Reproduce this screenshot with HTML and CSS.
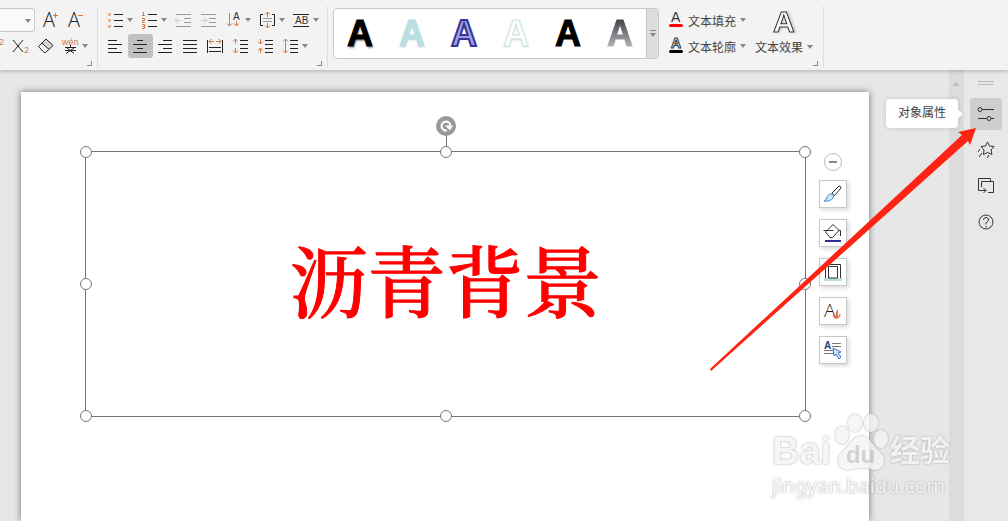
FILE: index.html
```html
<!DOCTYPE html>
<html lang="zh-CN">
<head>
  <meta charset="UTF-8">
  <meta name="viewport" content="width=device-width, initial-scale=1.0">
  <title>演示</title>
  <link rel="stylesheet" href="styles.css">
</head>
<body>
  <header class="ribbon">
    <div class="group group-font">
      <div class="row">
        <span class="combo"><select aria-label="字号"><option></option></select><i class="caret"></i></span>
        <button class="tool" aria-label="增大字号"><svg class="icon" viewBox="0 0 17 18"><text class="thin" x="0" y="16" font-size="20">A</text><path class="o" d="M10 4.500h5M12.500 2v5"/></svg></button>
        <button class="tool" aria-label="减小字号"><svg class="icon" viewBox="0 0 17 18"><text class="thin" x="0" y="16" font-size="20">A</text><path class="o" d="M10 4.500h5"/></svg></button>
      </div>
      <div class="row">
        <button class="tool" aria-label="上标"><svg class="icon" viewBox="0 0 17 18"><path class="k" d="M1 4l10 11M11 4L1 15"/><text class="ot" x="12" y="8" font-size="9">2</text></svg></button>
        <button class="tool" aria-label="下标"><svg class="icon" viewBox="0 0 17 18"><path class="k" d="M1 3l10 12M11 3L1 15"/><text class="ot" x="12" y="16" font-size="9">2</text></svg></button>
        <button class="tool" aria-label="清除格式"><svg class="icon" viewBox="0 0 17 18"><path d="M5 6l4-4 7 6-4 5z" fill="#d8d8d8"/><path class="k" d="M1.500 9.500L9 2l7 6.500-7.500 7H7zM5 6l7 6.500"/></svg></button>
        <button class="tool" aria-label="拼音指南"><svg class="icon" viewBox="0 0 17 18"><text class="ot" x="0" y="8" font-size="9">wén</text><path class="k" d="M3 10.500h11M8.500 8v2M5 11l7 5.500M12 11l-8 5.500M3 13.500h11"/></svg><i class="caret"></i></button>
      </div>
      <i class="launcher"></i>
    </div>

    <div class="group group-para">
      <div class="row">
        <button class="tool" aria-label="项目符号"><svg class="icon" viewBox="0 0 17 18"><path class="k" d="M7 3.500h9M7 9.500h9M7 15.500h9"/><g class="o"><circle cx="2.500" cy="3.500" r="1"/><circle cx="2.500" cy="9.500" r="1"/><circle cx="2.500" cy="15.500" r="1"/></g></svg><i class="caret"></i></button>
        <button class="tool" aria-label="编号"><svg class="icon" viewBox="0 0 17 18"><path class="k" d="M7 3.500h9M7 9.500h9M7 15.500h9"/><path class="o" d="M1.500 1.500h1v3M1 4.500h3M1 7.500h2.500v2h-2v2H4M1 13.500h2.500v4H1M1.500 15.500h2"/></svg><i class="caret"></i></button>
        <button class="tool" aria-label="减少缩进量" disabled><svg class="icon" viewBox="0 0 17 18"><path class="g" d="M1 3.500h15M9 7.500h7M9 11.500h7M1 15.500h15"/><path class="lg" d="M0 9.500h6M3 6.500l-3 3 3 3"/></svg></button>
        <button class="tool" aria-label="增加缩进量" disabled><svg class="icon" viewBox="0 0 17 18"><path class="g" d="M1 3.500h15M9 7.500h7M9 11.500h7M1 15.500h15"/><path class="lg" d="M1 9.500h6M4 6.500l3 3-3 3"/></svg></button>
        <button class="tool" aria-label="文字方向"><svg class="icon" viewBox="0 0 17 18"><path class="o" d="M4.500 2v13M2 12.500L4.500 15 7 12.500M11.500 10v5M9 12.500l2.500 2.500 2.500-2.500"/><text class="t" x="8" y="9" font-size="10">A</text></svg><i class="caret"></i></button>
        <button class="tool" aria-label="对齐文本"><svg class="icon" viewBox="0 0 17 18"><path class="k" d="M4 3.500H1.500v11H4M13 3.500h2.500v11H13"/><path class="g" d="M4 7.500h9M4 10.500h9"/><path class="o" d="M8.500 1v5M6 3.500L8.500 1 11 3.500M8.500 12v5M6 14.500L8.500 17l2.500-2.500"/></svg><i class="caret"></i></button>
        <button class="tool" aria-label="文本宽度"><svg class="icon" viewBox="0 0 17 18"><path class="k" d="M0 3.500h16M0 15.500h16"/><text class="t" x="2" y="13" font-size="10">AB</text></svg><i class="caret"></i></button>
      </div>
      <div class="row">
        <button class="tool" aria-label="左对齐"><svg class="icon" viewBox="0 0 17 18"><path class="k" d="M1 3.500h9M1 7.500h14M1 11.500h9M1 15.500h14"/></svg></button>
        <button class="tool active" aria-label="居中"><svg class="icon" viewBox="0 0 17 18"><path class="k" d="M5 3.500h6M1 7.500h14M5 11.500h6M1 15.500h14"/></svg></button>
        <button class="tool" aria-label="右对齐"><svg class="icon" viewBox="0 0 17 18"><path class="k" d="M6 3.500h9M1 7.500h14M6 11.500h9M1 15.500h14"/></svg></button>
        <button class="tool" aria-label="两端对齐"><svg class="icon" viewBox="0 0 17 18"><path class="k" d="M1 3.500h14M1 7.500h14M1 11.500h14M1 15.500h14"/></svg></button>
        <button class="tool" aria-label="分散对齐"><svg class="icon" viewBox="0 0 17 18"><path class="k" d="M.5 3v13M15.500 3v13M2 10.500h12M2 14.500h12"/><path class="o" d="M2 4.500h5M4.500 2L2 4.500 4.500 7M9 4.500h5M11.500 2L14 4.500 11.500 7"/></svg></button>
        <button class="tool" aria-label="增大段落间距"><svg class="icon" viewBox="0 0 17 18"><path class="k" d="M8 3.500h8M8 7.500h8M8 11.500h8M8 15.500h8"/><path class="o" d="M3.500 2v5M1 4.500L3.500 2 6 4.500M3.500 11v5M1 13.500L3.500 16 6 13.500"/></svg></button>
        <button class="tool" aria-label="减小段落间距"><svg class="icon" viewBox="0 0 17 18"><path class="k" d="M8 3.500h8M8 7.500h8M8 11.500h8M8 15.500h8"/><path class="o" d="M3.500 2v5M1 4.500L3.500 7 6 4.500M3.500 11v5M1 13.500L3.500 11 6 13.500"/></svg></button>
        <button class="tool" aria-label="行距"><svg class="icon" viewBox="0 0 17 18"><path class="k" d="M8 3.500h8M8 7.500h8M8 11.500h8M8 15.500h8"/><path class="o" d="M3.500 2v14M1 4.500L3.500 2 6 4.500M1 13.500L3.500 16 6 13.500"/></svg><i class="caret"></i></button>
      </div>
      <i class="launcher"></i>
    </div>

    <div class="gallery">
      <button class="style style-black">A</button>
      <button class="style style-cyan">A</button>
      <button class="style style-purple">A</button>
      <button class="style style-outline">A</button>
      <button class="style style-plain">A</button>
      <button class="style style-gradient">A</button>
      <button class="more" aria-label="更多样式"><i class="caret"></i></button>
    </div>

    <div class="group group-text">
      <div class="text-rows">
        <button class="text-tool"><svg class="text-icon" viewBox="0 0 14 18"><text class="t" x="2" y="11" font-size="14">A</text><path d="M1.500 14.500h11" stroke="#f00" stroke-width="3" stroke-linecap="round"/></svg>文本填充<i class="caret"></i></button>
        <button class="text-tool"><svg class="text-icon" viewBox="0 0 14 18"><text class="hollow" x="2" y="11" font-size="14">A</text><path d="M1.500 14.500h11" stroke="#000" stroke-width="3" stroke-linecap="round"/></svg>文本轮廓<i class="caret"></i></button>
      </div>
      <button class="effect-tool">
        <svg class="effect-icon" viewBox="0 0 26 26"><text class="hollow" x="2" y="24" font-size="30">A</text></svg>
        <span class="effect-label">文本效果<i class="caret"></i></span>
      </button>
      <i class="launcher"></i>
    </div>
  </header>

  <main class="workspace">
    <div class="canvas">
      <section class="slide">
        <div class="textbox">
          <h1 class="headline">沥青背景</h1>
          <i class="stem"></i>
          <svg class="rotate" viewBox="0 0 20 20"><circle cx="10" cy="10" r="10" fill="#999"/><path d="M11 14.500a4.500 4.500 0 1 1 3.500-5" fill="none" stroke="#fff" stroke-width="2"/><path d="M9 9.500h8l-3 5z" fill="#fff"/></svg>
          <i class="handle top left"></i><i class="handle top center"></i><i class="handle top right"></i>
          <i class="handle middle left"></i><i class="handle middle right"></i>
          <i class="handle bottom left"></i><i class="handle bottom center"></i><i class="handle bottom right"></i>
          <div class="quick">
            <button class="collapse" aria-label="收起"></button>
            <button class="quick-tool" aria-label="样式"><svg viewBox="0 0 20 20"><path d="M9 9l7-7q2 0 2 2l-7 8z" fill="#fff" stroke="#333"/><path d="M1 17q3-1 3-4 2-4 5-3 3 1 1 4-3 4-9 3z" fill="#cfe3fb" stroke="#4a87db"/></svg></button>
            <button class="quick-tool" aria-label="填充"><svg viewBox="0 0 20 20"><path d="M2.500 9L10 1.500l6 6-6.500 7H7zM.5 7.500h10M15 7.500h2.500V13" fill="none" stroke="#333"/><path d="M2 18h16" stroke="#2f2f9c" stroke-width="2"/></svg></button>
            <button class="quick-tool" aria-label="轮廓"><svg viewBox="0 0 20 20"><path d="M1 17.500h18" stroke="#b9dde0" stroke-width="3"/><path d="M2.500 16V2.500h15V16M5.500 16V4.500h9V16z" fill="none" stroke="#333"/></svg></button>
            <button class="quick-tool" aria-label="文字效果"><svg viewBox="0 0 20 20"><text class="thin" x="1" y="16" font-size="19">A</text><path d="M13 18q-4-2-3-6 1 3 3 3-1-4 2-7v8q1-1 2-4 2 4-4 6z" fill="#f26b45"/></svg></button>
            <button class="quick-tool" aria-label="选择文本"><svg viewBox="0 0 20 20"><text x="1" y="9" font-size="10" font-weight="bold" fill="#1e3c8c">A</text><path d="M9 3.500h9M9 6.500h9M1 10.500h12M1 13.500h10" stroke="#777"/><path d="M10 8l8 4-3 1 3 4-2 2-3-5-2 2z" fill="#cfe3fb" stroke="#3b75c9"/></svg></button>
          </div>
        </div>
      </section>
    </div>

    <div class="scrollbar"><i class="scroll-up"></i></div>

    <aside class="sidebar">
      <i class="grip"></i>
      <button class="side-tool active" aria-label="对象属性"><svg viewBox="0 0 20 20"><path d="M6 5.500h12M2 14.500h9M15 14.500h3"/><circle cx="4" cy="5.500" r="2"/><circle cx="13" cy="14.500" r="2"/></svg></button>
      <button class="side-tool" aria-label="动画"><svg viewBox="0 0 20 20"><path d="M11.500 2l2 4 4.500.5-3 3.500 1 4.500-4.500-2-4 2 .5-4.500L5 6.500 9.500 6zM4 9l-2 3M6 13l-3 4M13 15l-2 3"/></svg></button>
      <button class="side-tool" aria-label="切换"><svg viewBox="0 0 20 20"><path d="M5 14.500H2.500v-12h12V5M12 16.500h5.500v-11H5.500V11M5 14.500h5M7.500 12l2.500 2.500L7.500 17"/></svg></button>
      <button class="side-tool" aria-label="帮助"><svg viewBox="0 0 20 20"><circle cx="10" cy="10" r="7"/><path d="M7.500 8q0-2.500 2.500-2.500T12.500 8q0 1-1.500 2t-1 2.500M10 14v1.500"/></svg></button>
      <span class="tooltip">对象属性</span>
    </aside>

    <div class="watermark">
      <div class="logo">
        <span class="bai">Bai</span>
        <span class="paw"><svg viewBox="0 0 54 62"><ellipse cx="8" cy="24" rx="7" ry="9"/><ellipse cx="21" cy="12" rx="7" ry="9"/><ellipse cx="37" cy="12" rx="7" ry="9"/><ellipse cx="47" cy="28" rx="7" ry="9"/><path d="M27 25q7 0 10 6 4 6 9 10 6 7 3 13-4 7-12 4-9-2-18 0-10 3-14-4-3-7 3-13 5-4 9-10 4-6 10-6z"/></svg><b>du</b></span>
        <span class="jingyan">经验</span>
      </div>
      <div class="url">jingyan.baidu.com</div>
    </div>

    <svg class="arrow" viewBox="0 0 270 246"><path d="M266 3l-18 4 4 3L0 244l1 2L258 16l2 4z"/></svg>
  </main>
</body>
</html>
```
FILE: styles.css
```css
* {
  box-sizing: border-box;
}

body {
  margin: 0;
  height: 100vh;
  display: flex;
  flex-direction: column;
  overflow: hidden;
  background: #e7e7e7;
  color: #444;
  font-family: "Liberation Sans", "Noto Sans CJK SC", sans-serif;
  font-size: 12px;
}

button {
  margin: 0;
  padding: 0;
  border: none;
  background: none;
  color: inherit;
  font: inherit;
}

svg {
  overflow: visible;
}

/* ribbon */
.ribbon {
  position: relative;
  z-index: 1;
  flex: none;
  display: flex;
  height: 70px;
  background: #f3f3f3;
  box-shadow: 0 1px 4px rgba(0, 0, 0, 0.25);
}

.group {
  position: relative;
  flex: none;
  margin-bottom: 2px;
  padding-top: 8px;
}

.group::after {
  content: "";
  position: absolute;
  top: 6px;
  right: 0;
  bottom: 0;
  border-right: 1px solid #e0e0e0;
}

/* the ribbon is scrolled, its first group runs off the left edge */
.group-font {
  width: 115px;
  margin-left: -17px;
}

.group-para {
  width: 230px;
  padding-left: 5px;
}

.row {
  display: flex;
  height: 24px;
  margin-bottom: 2px;
}

.tool {
  display: flex;
  align-items: center;
  gap: 3px;
  height: 24px;
  padding: 0 4px;
  border-radius: 3px;
}

.tool.active {
  background: #c1c1c1;
}

.icon {
  width: 17px;
  height: 18px;
}

.caret {
  flex: none;
  border: 3px solid transparent;
  border-top: 4px solid #888;
  border-bottom: none;
}

.combo {
  position: relative;
  width: 52px;
  margin-right: 4px;
}

.combo select {
  width: 52px;
  height: 24px;
  appearance: none;
  border: 1px solid #c8c8c8;
  border-radius: 3px;
  background: #fafafa;
}

.combo .caret {
  position: absolute;
  top: 11px;
  right: 4px;
}

.launcher {
  position: absolute;
  right: 6px;
  bottom: 2px;
  width: 5px;
  height: 5px;
  border: solid #888;
  border-width: 0 1px 1px 0;
}

/* icon strokes */
.k, .o, .g, .lg {
  fill: none;
  stroke: #222;
}

.o {
  stroke: #cf7b45;
}

.g {
  stroke: #999;
}

.lg {
  stroke: #ccc;
}

.ot {
  fill: #cf7b45;
}

.t {
  fill: #333;
}

.thin {
  fill: #222;
  font-family: "Open Sans", sans-serif;
  font-weight: 300;
}

.hollow {
  fill: #fff;
  stroke: #333;
  font-weight: bold;
}

/* text style gallery */
.gallery {
  display: flex;
  flex: none;
  height: 51px;
  margin: 8px 0 0 5px;
  border: 1px solid #c8c8c8;
  border-radius: 4px;
  background: #fff;
  overflow: hidden;
}

.style {
  width: 52px;
  color: #000;
  font-size: 36px;
  font-weight: bold;
  line-height: 49px;
  -webkit-text-stroke: 1px;
}

.style-black {
  text-shadow: 1px 2px 2px #999;
}

.style-cyan {
  color: #b9dfe2;
  text-shadow: 0 1px 2px #ccc;
}

.style-purple {
  color: #9fa0dc;
  -webkit-text-stroke: 2px #33339b;
}

.style-outline {
  color: #fff;
  -webkit-text-stroke: 1px #cde4e6;
  text-shadow: 0 1px 2px #ccc;
}

.style-gradient {
  background: linear-gradient(#444a50 25%, #b0b0b5 75%);
  -webkit-background-clip: text;
  background-clip: text;
  color: transparent;
}

.more {
  display: flex;
  flex-direction: column;
  align-items: center;
  justify-content: center;
  width: 12px;
  border-left: 1px solid #c8c8c8;
  background: #ddd;
}

.more::before {
  content: "";
  width: 6px;
  margin-bottom: 2px;
  border-top: 1px solid #888;
}

/* text fill, outline, effects */
.group-text {
  display: flex;
  width: 165px;
  padding-left: 10px;
}

.text-rows {
  margin-right: 9px;
}

.text-tool {
  display: flex;
  align-items: center;
  height: 24px;
  margin-bottom: 2px;
}

.text-icon {
  width: 14px;
  height: 18px;
  margin-right: 5px;
}

.text-tool .caret,
.effect-label .caret {
  margin-left: 4px;
}

.effect-tool {
  display: flex;
  flex-direction: column;
  align-items: center;
  height: 50px;
}

.effect-icon {
  width: 26px;
  height: 26px;
  margin-bottom: 4px;
  filter: drop-shadow(2px 0 1px #ccc);
}

.effect-label {
  display: flex;
  align-items: center;
}

/* workspace */
.workspace {
  position: relative;
  flex: 1;
  min-height: 0;
  display: flex;
}

.canvas {
  flex: 1;
  display: flex;
  padding: 22px 80px 0 21px;
}

.slide {
  flex: 1;
  padding: 59px 63px 0 64px;
  background: #fff;
  box-shadow: 0 0 7px rgba(0, 0, 0, 0.5);
}

.textbox {
  position: relative;
  display: flex;
  justify-content: center;
  height: 266px;
  padding-top: 78px;
  border: 1px solid #777;
}

.headline {
  margin: 0;
  color: #f00;
  font-family: "SimSun", "Noto Serif CJK SC", "Noto Sans CJK SC", serif;
  font-size: 78px;
  font-weight: 500;
  line-height: 96px;
  -webkit-text-stroke: 1px;
}

.handle {
  position: absolute;
  width: 12px;
  height: 12px;
  margin: -6px;
  border: 1px solid #777;
  border-radius: 50%;
  background: #fff;
}

.top { top: 0; }
.middle { top: 50%; }
.bottom { bottom: 0; }
.left { left: 0; }
.center { left: 50%; }
.right { right: 0; }

.stem {
  position: absolute;
  top: -20px;
  left: 50%;
  height: 20px;
  border-left: 1px solid #777;
}

.rotate {
  position: absolute;
  top: -36px;
  left: 50%;
  width: 20px;
  margin-left: -10px;
}

/* floating buttons beside the text box */
.quick {
  position: absolute;
  top: 1px;
  left: 100%;
  display: flex;
  flex-direction: column;
  align-items: center;
  gap: 11px;
  margin-left: 14px;
}

.collapse {
  display: flex;
  align-items: center;
  justify-content: center;
  width: 18px;
  height: 18px;
  margin-bottom: -2px;
  border: 1px solid #bbb;
  border-radius: 50%;
  background: #fff;
}

.collapse::before {
  content: "";
  width: 8px;
  height: 2px;
  background: #888;
}

.quick-tool {
  display: flex;
  align-items: center;
  justify-content: center;
  width: 28px;
  height: 28px;
  border: 1px solid #c8c8c8;
  background: #fff;
  box-shadow: 2px 2px 4px rgba(0, 0, 0, 0.15);
}

.quick-tool svg {
  width: 20px;
  height: 20px;
}

.scrollbar {
  width: 15px;
  padding: 12px 4px;
  background: #dcdcdc;
}

.scroll-up {
  display: block;
  width: 6px;
  border: 3px solid transparent;
  border-top: none;
  border-bottom: 4px solid #bbb;
}

/* right task pane */
.sidebar {
  position: relative;
  display: flex;
  flex-direction: column;
  align-items: center;
  gap: 4px;
  width: 44px;
  padding-top: 11px;
  background: #e8e8e8;
}

.grip {
  width: 16px;
  height: 4px;
  margin-bottom: 9px;
  border: solid #bbb;
  border-width: 1px 0;
}

.side-tool {
  display: flex;
  align-items: center;
  justify-content: center;
  width: 32px;
  height: 32px;
  border-radius: 3px;
}

.side-tool.active {
  background: #cecece;
}

.side-tool svg {
  width: 20px;
  height: 20px;
  fill: none;
  stroke: #333;
}

.tooltip {
  position: absolute;
  top: 29px;
  right: 50px;
  width: 72px;
  border-radius: 4px;
  background: #fff;
  box-shadow: 0 0 5px rgba(0, 0, 0, 0.15);
  line-height: 29px;
  text-align: center;
  white-space: nowrap;
}

.tooltip::after {
  content: "";
  position: absolute;
  top: 11px;
  left: 100%;
  border: 4px solid transparent;
  border-left: 5px solid #fff;
  border-right: none;
}

.arrow {
  position: absolute;
  top: 55px;
  right: 28px;
  width: 270px;
  height: 246px;
  fill: #ff2314;
  pointer-events: none;
}

/* watermark */
.watermark {
  position: absolute;
  right: 58px;
  bottom: 22px;
  width: 178px;
  color: #f4f4f4;
  filter: drop-shadow(0 0 1px #999);
  opacity: 0.8;
}

.logo {
  display: flex;
  align-items: flex-end;
  justify-content: space-between;
  height: 62px;
}

.bai {
  font-size: 38px;
  font-weight: bold;
  line-height: 44px;
}

.paw {
  position: relative;
  width: 54px;
  height: 62px;
}

.paw svg {
  width: 54px;
  height: 62px;
  fill: #f4f4f4;
}

.paw b {
  position: absolute;
  right: 0;
  bottom: 4px;
  left: 0;
  color: #c8c8c8;
  font-size: 24px;
  text-align: center;
}

.jingyan {
  font-size: 30px;
  font-weight: bold;
  line-height: 44px;
}

.url {
  font-family: "Noto Sans", sans-serif;
  font-size: 20px;
  line-height: 26px;
}
```
